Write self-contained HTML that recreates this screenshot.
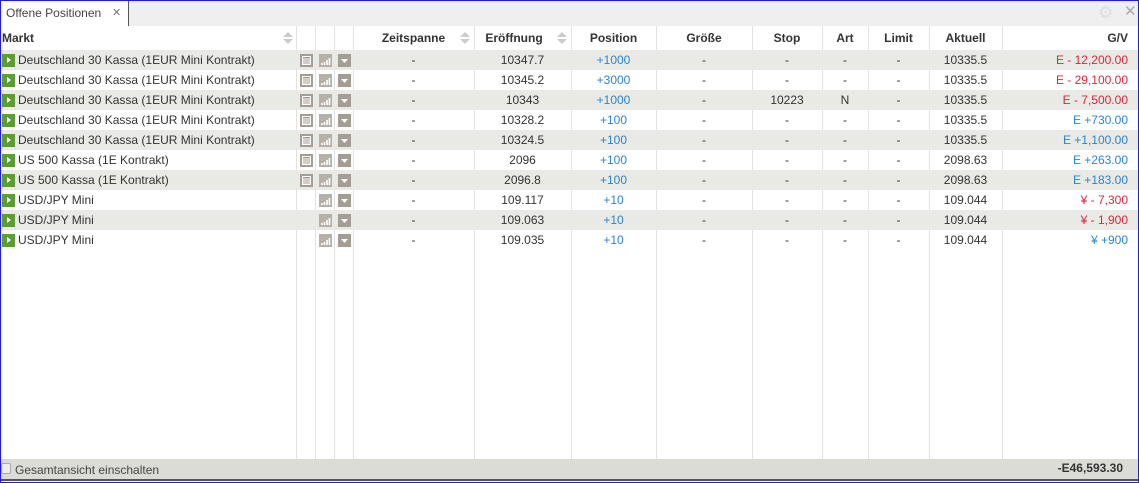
<!DOCTYPE html><html><head><style>
*{margin:0;padding:0;box-sizing:border-box}
body{width:1139px;height:483px;position:relative;overflow:hidden;background:#fff;font-family:"Liberation Sans",Arial,sans-serif;font-size:12px;color:#333}
.frame{position:absolute;left:0;top:0;width:1139px;height:483px;border:1px solid #1a1aff;pointer-events:none;z-index:10}
.tabbar{position:absolute;left:0;top:0;width:1139px;height:26px;background:#efefef}
.tab{position:absolute;left:1px;top:1px;width:128px;height:25px;background:#fff;border-right:1px solid #555;padding:5px 0 0 5px;font-size:12px;color:#444}
.tab span{position:absolute;left:111px;top:5px;font-size:11px;color:#777}
.row{position:absolute;left:1px;width:1137px;height:20px}
.g{background:#e9e9e5}
.c{position:absolute;top:0;height:20px;line-height:20px;white-space:nowrap}
.vl{position:absolute;top:26px;height:433px;width:1px;background:#e2e2e2}
.h{font-weight:bold;color:#333;line-height:24px;top:26px;position:absolute}
.b{color:#2a86cf}.r{color:#d7283c}
.ico{position:absolute;top:4px;width:13px;height:13px}
.play{position:absolute;left:1px;top:4px;width:13px;height:13px;background:#5a9e2f}
.play:after{content:"";position:absolute;left:5px;top:3px;border-left:4px solid #fff;border-top:3.5px solid transparent;border-bottom:3.5px solid transparent}
.sort{position:absolute;top:32px;width:10px;height:14px}
.sort:before{content:"";position:absolute;left:0;top:0;border-bottom:5px solid #ccc;border-left:5px solid transparent;border-right:5px solid transparent}
.sort:after{content:"";position:absolute;left:0;top:7px;border-top:5px solid #ccc;border-left:5px solid transparent;border-right:5px solid transparent}
.foot{position:absolute;left:0;top:459px;width:1139px;height:22px;background:#dcdcd6;border-bottom:2px solid #555}
</style></head><body>
<div class="tabbar"><div class="tab">Offene Positionen<span>✕</span></div>
<div style="position:absolute;left:1098px;top:3px;font-size:17px;color:#ddd">⚙</div>
<div style="position:absolute;left:1124px;top:2px;font-size:15px;color:#aaa">✕</div></div>
<div class="vl" style="left:296px"></div><div class="vl" style="left:315px"></div><div class="vl" style="left:334px"></div><div class="vl" style="left:353px"></div><div class="vl" style="left:474px"></div><div class="vl" style="left:571px"></div><div class="vl" style="left:656px"></div><div class="vl" style="left:752px"></div><div class="vl" style="left:822px"></div><div class="vl" style="left:868px"></div><div class="vl" style="left:929px"></div><div class="vl" style="left:1002px"></div>
<div class="h" style="left:2px">Markt</div><div class="sort" style="left:283px"></div>
<div class="h" style="left:353px;width:121px;text-align:center">Zeitspanne</div><div class="sort" style="left:460px"></div>
<div class="h" style="left:474px;width:80px;text-align:center">Eröffnung</div><div class="sort" style="left:557px"></div>
<div class="h" style="left:571px;width:85px;text-align:center">Position</div>
<div class="h" style="left:656px;width:96px;text-align:center">Größe</div>
<div class="h" style="left:752px;width:70px;text-align:center">Stop</div>
<div class="h" style="left:822px;width:46px;text-align:center">Art</div>
<div class="h" style="left:868px;width:61px;text-align:center">Limit</div>
<div class="h" style="left:929px;width:73px;text-align:center">Aktuell</div>
<div class="h" style="left:1002px;width:126px;text-align:right">G/V</div>
<div id="rows"></div>
<script>
var d=[["Deutschland 30 Kassa (1EUR Mini Kontrakt)",1,"10347.7","+1000","-","-","-","10335.5","E - 12,200.00","r"],
["Deutschland 30 Kassa (1EUR Mini Kontrakt)",1,"10345.2","+3000","-","-","-","10335.5","E - 29,100.00","r"],
["Deutschland 30 Kassa (1EUR Mini Kontrakt)",1,"10343","+1000","10223","N","-","10335.5","E - 7,500.00","r"],
["Deutschland 30 Kassa (1EUR Mini Kontrakt)",1,"10328.2","+100","-","-","-","10335.5","E +730.00","b"],
["Deutschland 30 Kassa (1EUR Mini Kontrakt)",1,"10324.5","+100","-","-","-","10335.5","E +1,100.00","b"],
["US 500 Kassa (1E Kontrakt)",1,"2096","+100","-","-","-","2098.63","E +263.00","b"],
["US 500 Kassa (1E Kontrakt)",1,"2096.8","+100","-","-","-","2098.63","E +183.00","b"],
["USD/JPY Mini",0,"109.117","+10","-","-","-","109.044","¥ - 7,300","r"],
["USD/JPY Mini",0,"109.063","+10","-","-","-","109.044","¥ - 1,900","r"],
["USD/JPY Mini",0,"109.035","+10","-","-","-","109.044","¥ +900","b"]];
var news='<svg class="ico" style="left:299px" width="13" height="13"><rect width="13" height="13" fill="#a39d93"/><rect x="2.5" y="2.5" width="8" height="8" fill="none" stroke="#fff"/><path d="M3 5h7M3 7h7M3 9h7" stroke="#fff" stroke-width="1"/></svg>';
var chart='<svg class="ico" style="left:318px" width="13" height="13"><rect width="13" height="13" fill="#b5b0a8"/><path d="M3 11v-2M5.5 11v-3M8 11v-5M10.5 11v-7" stroke="#fff" stroke-width="1.6"/></svg>';
var dd='<svg class="ico" style="left:337px" width="13" height="13"><rect width="13" height="13" fill="#a39d93"/><path d="M3 5h7l-3.5 4z" fill="#fff"/></svg>';
var h="";d.forEach(function(r,i){h+='<div class="row'+(i%2?'':' g')+'" style="top:'+(50+i*20)+'px"><div class="play"></div><div class="c" style="left:17px">'+r[0]+'</div>'+(r[1]?news:'')+chart+dd+
'<div class="c" style="left:352px;width:121px;text-align:center">-</div><div class="c" style="left:473px;width:97px;text-align:center">'+r[2]+'</div><div class="c b" style="left:570px;width:85px;text-align:center">'+r[3]+'</div><div class="c" style="left:655px;width:96px;text-align:center">-</div><div class="c" style="left:751px;width:70px;text-align:center">'+r[4]+'</div><div class="c" style="left:821px;width:46px;text-align:center">'+r[5]+'</div><div class="c" style="left:867px;width:61px;text-align:center">'+r[6]+'</div><div class="c" style="left:928px;width:73px;text-align:center">'+r[7]+'</div><div class="c '+r[9]+'" style="left:1001px;width:126px;text-align:right">'+r[8]+'</div></div>';});
document.getElementById("rows").innerHTML=h;
</script>
<div class="foot"><div style="position:absolute;left:1px;top:4px;width:10px;height:11px;border:1px solid #aaa;border-radius:2px;background:#eee"></div><div style="position:absolute;left:15px;top:4px;color:#444">Gesamtansicht einschalten</div><div style="position:absolute;right:16px;top:2px;font-weight:bold;color:#333">-E46,593.30</div></div>
<div class="frame"></div>
</body></html>
